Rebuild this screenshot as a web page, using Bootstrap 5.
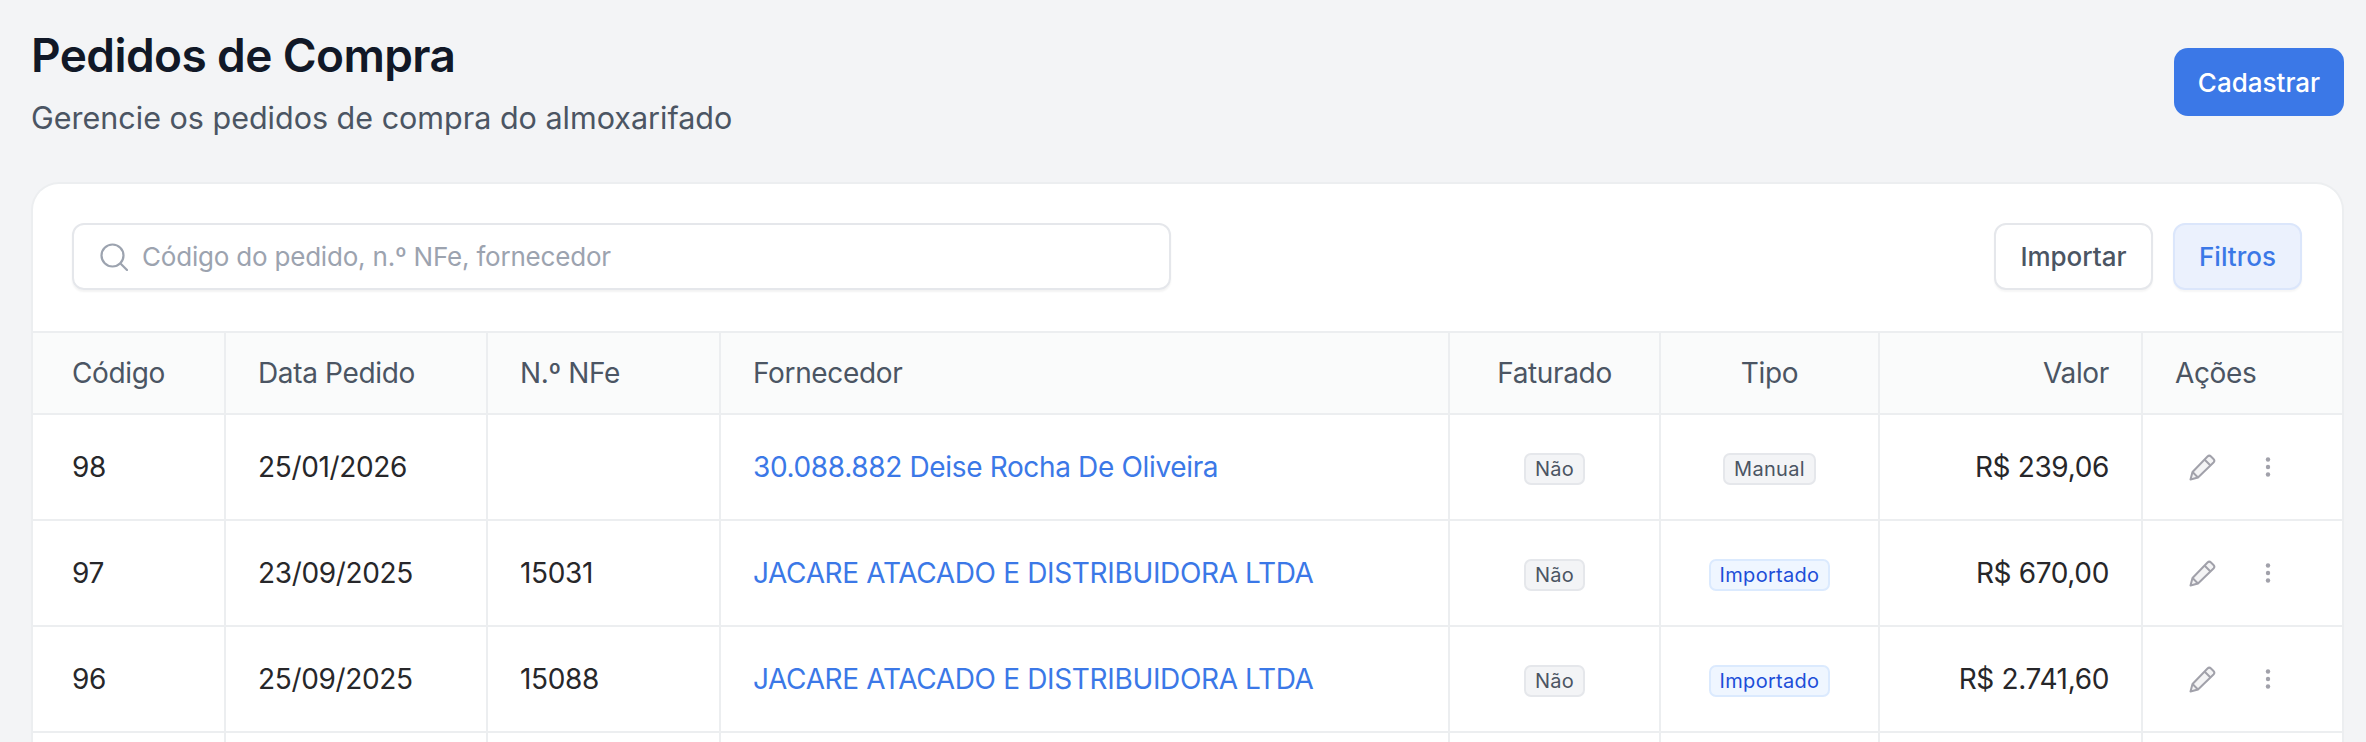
<!DOCTYPE html>
<html lang="pt-BR">
<head>
    <meta charset="UTF-8">
    <meta name="viewport" content="width=device-width, initial-scale=1.0">
    <title>Pedidos de Compra</title>
    <link href="https://cdn.jsdelivr.net/npm/bootstrap@5.3.0/dist/css/bootstrap.min.css" rel="stylesheet">
    <style>
        html, body { height: 100%; overflow: hidden; }
        body { background-color: #f3f4f6; font-family: "Inter", "Liberation Sans", sans-serif; font-size: 28px; color: #27272a; }
        .page-wrap { padding: 30px 22px 0 31px; }
        .page-title { font-size: 46px; font-weight: 600; line-height: 50px; letter-spacing: -0.6px; color: #111827; margin: 0; }
        .page-sub { font-size: 30.5px; line-height: 40px; color: #4b5563; margin: 18px 0 0; }
        .btn-cadastrar { background: #3b78e7; border: 0; color: #fff; font-size: 26px; font-weight: 500; width: 170px; height: 68px; border-radius: 14px; margin-top: 18px; padding: 0; }
        .orders-card { margin-top: 44px; border: 2px solid #eceef0; border-bottom: 0; border-radius: 28px 28px 0 0; background: #fff; overflow: hidden; }
        .toolbar { padding: 39px 40px 39px 39px; height: 147px; }
        .search-box { width: 1099px; height: 67px; border: 2px solid #e5e7eb; border-radius: 12px; box-shadow: 0 2px 2px rgba(0,0,0,.05); padding: 0 26px; gap: 14px; }
        .search-box svg { flex: none; }
        .search-box input { border: 0; outline: 0; padding: 0; font-size: 26px; letter-spacing: -0.2px; color: #27272a; background: transparent; box-shadow: none; }
        .search-box input::placeholder { color: #9ca3af; opacity: 1; }
        .tool-actions { gap: 20px; }
        .tool-btn { height: 67px; font-size: 26px; font-weight: 500; border-radius: 12px; padding: 0; box-shadow: 0 2px 2px rgba(0,0,0,.04); }
        .btn-importar { width: 159px; background: #fff; border: 2px solid #e5e7eb; color: #4b5563; }
        .btn-filtros { width: 129px; background: #ebf1fd; border: 2px solid #dbe6fb; color: #3b78e7; }
        .orders-table { table-layout: fixed; width: 100%; margin: 0; --bs-table-bg: transparent; font-size: 28px; letter-spacing: -0.35px; }
        .orders-table th, .orders-table td { border: 2px solid #eceef0; padding: 0 32px; vertical-align: middle; }
        .orders-table tr > :first-child { border-left: 0; padding-left: 39px; }
        .orders-table tr > :last-child { border-right: 0; }
        .orders-table thead th { background: #fafbfb; height: 82px; font-weight: 400; color: #4b5563; }
        .orders-table tbody td { height: 106px; color: #27272a; }
        .w-codigo { width: 192px; }
        .w-data { width: 262px; }
        .w-nfe { width: 233px; }
        .w-fornecedor { width: 729px; }
        .w-faturado { width: 211px; }
        .w-tipo { width: 219px; }
        .w-valor { width: 263px; }
        .forn-link { color: #3b78e7; text-decoration: none; }
        .tag { display: inline-block; height: 32px; line-height: 28px; font-size: 20px; font-weight: 400; letter-spacing: .3px; border-radius: 7px; padding: 0 9px; vertical-align: middle; }
        .tag-gray { background: #f3f4f6; border: 2px solid #e5e7eb; color: #4b5563; }
        .tag-blue { background: #eff6ff; border: 2px solid #dbeafe; color: #1d4ed8; }
        .acoes { gap: 48px; padding-left: 14px; }
    </style>
</head>
<body>
    <div class="page-wrap">
        <!-- Header -->
        <div class="d-flex justify-content-between align-items-start">
            <div>
                <h1 class="page-title">Pedidos de Compra</h1>
                <p class="page-sub">Gerencie os pedidos de compra do almoxarifado</p>
            </div>
            <button class="btn btn-primary btn-cadastrar">Cadastrar</button>
        </div>

        <div class="orders-card">
            <!-- Toolbar -->
            <div class="toolbar d-flex justify-content-between align-items-start">
                <div class="search-box d-flex align-items-center">
                    <svg width="28" height="28" viewBox="0 0 28 28" fill="none" stroke="#9ca3af" stroke-width="2.2" stroke-linecap="round"><circle cx="12.500" cy="12.500" r="11"/><path d="M20.500 20.500l6.500 6.500"/></svg>
                    <input class="form-control" type="text" placeholder="Código do pedido, n.º NFe, fornecedor">
                </div>
                <div class="tool-actions d-flex">
                    <button class="btn tool-btn btn-importar">Importar</button>
                    <button class="btn tool-btn btn-filtros">Filtros</button>
                </div>
            </div>

            <!-- Table -->
            <table class="table orders-table">
                <colgroup>
                    <col class="w-codigo"><col class="w-data"><col class="w-nfe"><col class="w-fornecedor">
                    <col class="w-faturado"><col class="w-tipo"><col class="w-valor"><col>
                </colgroup>
                <thead>
                    <tr>
                        <th>Código</th>
                        <th>Data Pedido</th>
                        <th>N.º NFe</th>
                        <th>Fornecedor</th>
                        <th class="text-center">Faturado</th>
                        <th class="text-center">Tipo</th>
                        <th class="text-end">Valor</th>
                        <th>Ações</th>
                    </tr>
                </thead>
                <tbody id="ordersBody"></tbody>
            </table>
        </div>
    </div>

    <script src="https://cdn.jsdelivr.net/npm/bootstrap@5.3.0/dist/js/bootstrap.bundle.min.js"></script>
    <script>
        const pedidos = [
            { id: 98, data: '25/01/2026', nfe: '', forn: '30.088.882 Deise Rocha De Oliveira', tipo: 'Manual', valor: 'R$ 239,06' },
            { id: 97, data: '23/09/2025', nfe: '15031', forn: 'JACARE ATACADO E DISTRIBUIDORA LTDA', tipo: 'Importado', valor: 'R$ 670,00' },
            { id: 96, data: '25/09/2025', nfe: '15088', forn: 'JACARE ATACADO E DISTRIBUIDORA LTDA', tipo: 'Importado', valor: 'R$ 2.741,60' }
        ];

        const pencil = `<svg width="27" height="27" viewBox="0 0 27 27" fill="none" stroke="#a1a1aa" stroke-width="2" stroke-linejoin="round"><path d="M1.500 25.500l2-7.500L18.500 2.500a2.500 2.500 0 0 1 3.500 0l2.500 2.500a2.500 2.500 0 0 1 0 3.500L9 23.500z" fill="#f4f4f5"/><path d="M15.500 5.500l6 6M3.500 18L9 23.500"/></svg>`;
        const dots = `<svg width="8" height="22" viewBox="0 0 8 22" fill="#a1a1aa"><circle cx="4" cy="3.500" r="2.200"/><circle cx="4" cy="11" r="2.200"/><circle cx="4" cy="18.500" r="2.200"/></svg>`;

        const tbody = document.getElementById('ordersBody');
        pedidos.forEach(p => {
            const row = document.createElement('tr');
            const tagClass = p.tipo === 'Importado' ? 'tag-blue' : 'tag-gray';
            row.innerHTML = `
                <td>${p.id}</td>
                <td>${p.data}</td>
                <td>${p.nfe}</td>
                <td><a class="forn-link" href="#">${p.forn}</a></td>
                <td class="text-center"><span class="tag tag-gray">Não</span></td>
                <td class="text-center"><span class="tag ${tagClass}">${p.tipo}</span></td>
                <td class="text-end">${p.valor}</td>
                <td><div class="acoes d-flex align-items-center">${pencil}${dots}</div></td>
            `;
            tbody.appendChild(row);
        });
        // next row is cut by the window, only its top shows
        tbody.insertAdjacentHTML('beforeend', '<tr>' + '<td></td>'.repeat(8) + '</tr>');
    </script>
</body>
</html>
